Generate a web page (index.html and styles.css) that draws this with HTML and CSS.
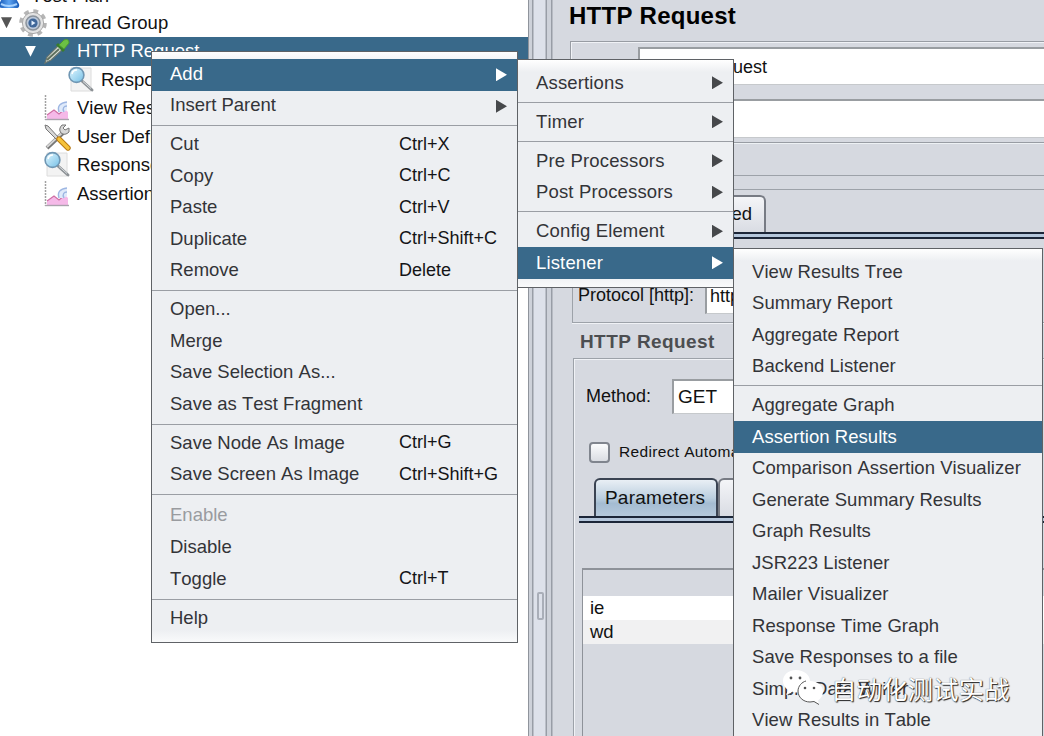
FILE: index.html
```html
<!DOCTYPE html>
<html lang="en">
<head>
    <meta charset="UTF-8">
    <meta name="viewport" content="width=device-width, initial-scale=1.0">
    <title>HTTP Request</title>
    <link rel="stylesheet" href="styles.css">
</head>
<body>
    <!-- Shared icons -->
    <svg class="defs" width="0" height="0">
        <defs>
            <linearGradient id="lens" x1="0" y1="0" x2="1" y2="1">
                <stop offset="0" stop-color="#e4f8ff"/>
                <stop offset="1" stop-color="#74bfe6"/>
            </linearGradient>
            <linearGradient id="flask" x1="0" y1="0" x2="1" y2="0">
                <stop offset="0" stop-color="#1557b5"/>
                <stop offset="0.5" stop-color="#5da4f2"/>
                <stop offset="1" stop-color="#1557b5"/>
            </linearGradient>
            <symbol id="icon-search" viewBox="0 0 28 28">
                <path d="M4 2h20v23H4z" fill="#f3f3f3" stroke="#dcdcdc"/>
                <path d="M15 15l10 9" stroke="#8d9296" stroke-width="3" stroke-linecap="round"/>
                <path d="M16 15.500l8 7" stroke="#d9dde0" stroke-width="1"/>
                <circle cx="9.500" cy="9" r="7.400" fill="url(#lens)" stroke="#6f96b3" stroke-width="1.600"/>
                <path d="M5 8a5 5 0 0 1 5-4" fill="none" stroke="#fff" stroke-width="1.500"/>
            </symbol>
            <symbol id="icon-graph" viewBox="0 0 28 28">
                <path d="M4 21l7-5 5 4 6-5 3 3v7H4z" fill="#f5b9e8"/>
                <path d="M4 21l7-5 5 4 6-5" fill="none" stroke="#cf6fa4" stroke-width="1.200"/>
                <path d="M16 18c-2-6 1-10 8-10v8l-3 2z" fill="#dfeafa"/>
                <path d="M16 18c-2-6 1-9 8-10M21 18c-2-4 0-6 3-6" fill="none" stroke="#9db6e2" stroke-width="1.400"/>
                <path d="M2.500 1v25" stroke="#a2a2a2" stroke-width="1.500" stroke-dasharray="2 1"/>
                <path d="M2 25.500h24" stroke="#aaa3ad" stroke-width="1.400"/>
            </symbol>
        </defs>
    </svg>

    <div class="window">
        <div class="tree">
            <div class="node node-root">
                <svg class="icon" viewBox="0 0 28 28"><path d="M10 1h8v10l6 11q1 4-3 4H7q-4 0-3-4l6-11z" fill="url(#flask)"/><path d="M6 22q8 4 16 0" stroke="#a6d2ff" stroke-width="2" fill="none"/></svg>
                <span>Test Plan</span>
            </div>
            <div class="node node-group">
                <i class="toggle"></i>
                <svg class="icon" viewBox="0 0 28 28">
                    <circle cx="14" cy="14" r="12" fill="none" stroke="#b5b5b5" stroke-width="3.600" stroke-dasharray="4.800 4.620"/>
                    <circle cx="14" cy="14" r="10.600" fill="#e2e2e2" stroke="#a9a9a9"/>
                    <circle cx="14" cy="14" r="7" fill="#b9c6d8" stroke="#8a929b" stroke-width="1.500"/>
                    <circle cx="14" cy="14" r="4.600" fill="#3e6699"/>
                    <path d="M12.500 11.500l4 2.500-4 2.500z" fill="#e4f1ff"/>
                </svg>
                <span>Thread Group</span>
            </div>
            <div class="node node-sampler selected">
                <i class="toggle"></i>
                <svg class="icon" viewBox="0 0 28 28">
                    <path d="M2 26l2-6L16 8l4 4L8 23z" fill="#dfe6df" stroke="#6b7770" stroke-width="1.200"/>
                    <path d="M4 23L16 12" stroke="#5f705d" stroke-width="2"/>
                    <path d="M14 7l7 7" stroke="#397d2c" stroke-width="3"/>
                    <path d="M16 8l5-5q5-2 5 3l-5 6z" fill="#6cc144" stroke="#4e9e2f"/>
                </svg>
                <span>HTTP Request</span>
            </div>
            <div class="node node-child">
                <svg class="icon"><use href="#icon-search"/></svg>
                <span>Response Assertion</span>
            </div>
            <div class="node node-leaf">
                <svg class="icon"><use href="#icon-graph"/></svg>
                <span>View Results Tree</span>
            </div>
            <div class="node node-leaf">
                <svg class="icon" viewBox="0 0 28 28">
                    <path d="M4 25L20 10" stroke="#777" stroke-width="4"/>
                    <path d="M4 24L20 9" stroke="#d5d5d5" stroke-width="1.800"/>
                    <path d="M19 2q-4 4-1 8 4 3 8-1V5l-4 2-2-2 3-3z" fill="#d8d8d8" stroke="#777"/>
                    <path d="M2 2l3 1 11 12-2 2L3 6z" fill="#d7d7d7" stroke="#777"/>
                    <path d="M16 16l9 9" stroke="#b87912" stroke-width="5.400" stroke-linecap="round"/>
                    <path d="M16 16l9 9" stroke="#f6c33b" stroke-width="3.400" stroke-linecap="round"/>
                </svg>
                <span>User Defined Variables</span>
            </div>
            <div class="node node-leaf">
                <svg class="icon"><use href="#icon-search"/></svg>
                <span>Response Assertion</span>
            </div>
            <div class="node node-leaf">
                <svg class="icon"><use href="#icon-graph"/></svg>
                <span>Assertion Results</span>
            </div>
        </div>

        <div class="divider"><i class="grip"></i></div>

        <div class="editor">
            <h1>HTTP Request</h1>
            <div class="name-box">
                <div class="field name-field">HTTP Request</div>
                <div class="field comment-field"></div>
            </div>
            <div class="server-box">
                <div class="main-tabs">
                    <div class="tab">Advanced</div>
                </div>
                <div class="tab-line"></div>
                <div class="protocol">
                    <label>Protocol [http]:</label>
                    <div class="field">http</div>
                </div>
            </div>
            <h2>HTTP Request</h2>
            <div class="request-box">
                <div class="method">
                    <label>Method:</label>
                    <div class="field">GET</div>
                </div>
                <div class="redirect"><i class="checkbox"></i>Redirect Automatically</div>
                <div class="param-tabs">
                    <div class="tab active">Parameters</div>
                    <div class="tab"></div>
                </div>
                <div class="tab-line"></div>
                <div class="table">
                    <div class="table-head"></div>
                    <div class="table-row">ie</div>
                    <div class="table-row odd">wd</div>
                </div>
            </div>
        </div>
    </div>

    <!-- Popup menus -->
    <div class="menu menu-main">
        <div class="item active"><span>Add</span><i class="arrow"></i></div>
        <div class="item"><span>Insert Parent</span><i class="arrow"></i></div>
        <hr>
        <div class="item"><span>Cut</span><kbd>Ctrl+X</kbd></div>
        <div class="item"><span>Copy</span><kbd>Ctrl+C</kbd></div>
        <div class="item"><span>Paste</span><kbd>Ctrl+V</kbd></div>
        <div class="item"><span>Duplicate</span><kbd>Ctrl+Shift+C</kbd></div>
        <div class="item"><span>Remove</span><kbd>Delete</kbd></div>
        <hr>
        <div class="item"><span>Open...</span></div>
        <div class="item"><span>Merge</span></div>
        <div class="item"><span>Save Selection As...</span></div>
        <div class="item"><span>Save as Test Fragment</span></div>
        <hr>
        <div class="item"><span>Save Node As Image</span><kbd>Ctrl+G</kbd></div>
        <div class="item"><span>Save Screen As Image</span><kbd>Ctrl+Shift+G</kbd></div>
        <hr>
        <div class="item disabled"><span>Enable</span></div>
        <div class="item"><span>Disable</span></div>
        <div class="item"><span>Toggle</span><kbd>Ctrl+T</kbd></div>
        <hr>
        <div class="item"><span>Help</span></div>
    </div>

    <div class="menu menu-add">
        <div class="item"><span>Assertions</span><i class="arrow"></i></div>
        <hr>
        <div class="item"><span>Timer</span><i class="arrow"></i></div>
        <hr>
        <div class="item"><span>Pre Processors</span><i class="arrow"></i></div>
        <div class="item"><span>Post Processors</span><i class="arrow"></i></div>
        <hr>
        <div class="item"><span>Config Element</span><i class="arrow"></i></div>
        <div class="item active"><span>Listener</span><i class="arrow"></i></div>
    </div>

    <div class="menu menu-listener">
        <div class="item"><span>View Results Tree</span></div>
        <div class="item"><span>Summary Report</span></div>
        <div class="item"><span>Aggregate Report</span></div>
        <div class="item"><span>Backend Listener</span></div>
        <hr>
        <div class="item"><span>Aggregate Graph</span></div>
        <div class="item active"><span>Assertion Results</span></div>
        <div class="item"><span>Comparison Assertion Visualizer</span></div>
        <div class="item"><span>Generate Summary Results</span></div>
        <div class="item"><span>Graph Results</span></div>
        <div class="item"><span>JSR223 Listener</span></div>
        <div class="item"><span>Mailer Visualizer</span></div>
        <div class="item"><span>Response Time Graph</span></div>
        <div class="item"><span>Save Responses to a file</span></div>
        <div class="item"><span>Simple Data Writer</span></div>
        <div class="item"><span>View Results in Table</span></div>
    </div>

    <div class="watermark">
        <svg width="42" height="38" viewBox="0 0 42 38">
            <path d="M14 2C6 2 1 7 1 13c0 4 2 7 5 9l-2 5 6-3c9 2 18-2 18-11C28 7 22 2 14 2z" fill="#fff"/>
            <path d="M28 13c-7 0-12 5-12 10.500s5 10.500 12 10.500l4-.5 5 3-1-4c3-2 5-5 5-9 0-6-6-10.500-13-10.500z" fill="#fff"/>
            <path d="M16 23c0 6 5 11 12 11l4-.5 5 3M16 23c0-5 4-9 8-10M6 27l5-3" fill="none" stroke="#555"/>
            <g fill="#555"><circle cx="9" cy="10" r="1.400"/><circle cx="18" cy="10" r="1.400"/><circle cx="23" cy="20" r="1.300"/><circle cx="32" cy="20" r="1.300"/></g>
        </svg>
        <span>自动化测试实战</span>
    </div>
</body>
</html>
```
FILE: styles.css
```css
:root {
    --panel: #d6d9e0;
    --select: #39698a;
    --menu: #edeff2;
    --line: #9da2a9;
    --navy: #1c2638;
}

* {
    margin: 0;
    padding: 0;
    box-sizing: border-box;
}

body {
    position: relative;
    width: 1044px;
    height: 736px;
    overflow: hidden;
    font-family: "Liberation Sans", Arial, sans-serif;
    font-size: 18.5px;
    font-kerning: none;
    color: #111;
    white-space: nowrap;
    background: var(--panel);
}

.defs {
    position: absolute;
}

.window {
    display: flex;
    height: 736px;
}

/* Test plan tree */
.tree {
    width: 528px;
    height: 756px;
    margin-top: -20px;
    background: #fff;
}

.node {
    display: flex;
    align-items: center;
    height: 28.5px;
}

.node .icon {
    width: 28px;
    height: 28px;
    margin-right: 6px;
    flex: none;
}

.node-root {
    padding-top: 4px;
    margin-left: -5px;
}

.node-root span {
    margin-left: 2px;
}

.node-group {
    padding-left: 1px;
}

.node-group .toggle {
    margin-right: 7px;
}

.node-sampler {
    padding-left: 25px;
}

.node-sampler .toggle {
    margin-right: 7px;
}

.node-child {
    padding-left: 67px;
}

.node-leaf {
    padding-left: 43px;
}

.toggle {
    width: 11px;
    height: 11px;
    background: #555;
    clip-path: polygon(0 0, 100% 0, 50% 100%);
}

.selected {
    color: #fff;
    background: var(--select);
}

.selected .toggle {
    background: #fff;
}

/* Split pane divider */
.divider {
    width: 25px;
    padding: 592px 0 0 8px;
    border-left: 1px solid #8f949c;
    background: linear-gradient(90deg, #cdd1d9 0 3px, #989da6 3px 4px, #dde1ea 5px 16px, #989da6 17px 18px, #cdd1d9 18px 22px, #989da6 22px 23px, #d6d9e0 24px);
}

.grip {
    display: block;
    width: 7px;
    height: 28px;
    border: 2px solid #a9aeb8;
    border-radius: 2px;
}

/* Editor */
.editor {
    flex: 1;
    overflow: hidden;
}

h1 {
    height: 41px;
    padding: 2px 0 0 16px;
    font-size: 24px;
    letter-spacing: 0.25px;
    line-height: 28px;
    color: #000;
}

h2 {
    height: 35px;
    padding-left: 27px;
    font-size: 19px;
    letter-spacing: 0.4px;
    line-height: 38px;
    color: #4c4e51;
}

.field {
    border: 2px solid #999da1;
    border-bottom: 1px solid #c6c9cc;
    background: #fff;
}

.name-box {
    height: 102px;
    margin-left: 17px;
    padding: 5px 0 0 67px;
    border: solid #989ca3;
    border-width: 1px 0 1px 1px;
    box-shadow: inset 1px 1px #f0f2f6, 0 1px #edf1f4;
}

.name-field {
    height: 38px;
    padding-left: 8px;
    font-size: 18px;
    line-height: 36px;
    border-right: 0;
}

.comment-field {
    height: 39px;
    margin-top: 14px;
    border-right: 0;
}

.server-box {
    height: 148px;
    margin: 32px 0 0 19px;
    border: solid var(--line);
    border-width: 1px 0 1px 1px;
    box-shadow: 0 1px #f0f2f6;
    background: linear-gradient(var(--line) 0 1px, transparent 1px) 0 13px no-repeat;
}

.main-tabs {
    display: flex;
    height: 56px;
    padding: 19px 0 0 93px;
}

.tab {
    border: 2px solid #777b84;
    border-bottom: 0;
    border-radius: 6px 6px 0 0;
    background: linear-gradient(#f4f5f8, #d9dce3);
    font-size: 19px;
    letter-spacing: 0.2px;
}

.main-tabs .tab {
    width: 100px;
    padding: 0 12px 0 0;
    text-align: right;
    font-size: 18.5px;
    letter-spacing: 0;
    line-height: 33px;
}

.tab-line {
    height: 7px;
    border: solid var(--navy);
    border-width: 2px 0;
    background: #b5c7dc;
}

.protocol {
    display: flex;
    padding: 39px 0 0 5px;
    line-height: 34px;
    font-size: 18px;
}

.protocol label {
    width: 127px;
}

.protocol .field {
    width: 200px;
    height: 36px;
    padding-left: 3px;
    line-height: 33px;
}

.request-box {
    height: 400px;
    margin-left: 20px;
    border: solid var(--line);
    border-width: 1px 0 0 1px;
    box-shadow: inset 1px 1px #f0f2f6;
}

.method {
    display: flex;
    padding: 20px 0 0 12px;
    line-height: 34px;
    font-size: 18px;
}

.method label {
    width: 86px;
}

.method .field {
    width: 180px;
    height: 35px;
    padding-left: 4px;
    line-height: 31px;
    font-size: 19px;
}

.redirect {
    display: flex;
    align-items: center;
    height: 22px;
    margin: 27px 0 15px 15px;
    font-size: 15.5px;
    letter-spacing: 0.35px;
}

.checkbox {
    width: 21px;
    height: 21px;
    margin-right: 9px;
    border: 2px solid #80858e;
    border-radius: 4px;
    background: linear-gradient(#fbfcfd, #dadde3);
}

.param-tabs {
    display: flex;
    height: 38px;
    padding-left: 20px;
}

.param-tabs .tab {
    width: 122px;
}

.param-tabs .tab.active {
    width: 124px;
    padding-left: 9px;
    line-height: 35px;
    border-color: #3a4352;
    background: linear-gradient(#e9eff5, #bccfdf 50%, #a4bcd2 65%, #b5c9dc);
}

.request-box .tab-line {
    margin-left: 5px;
}

.table {
    height: 200px;
    margin: 45px 0 0 8px;
    border: solid #8e9299;
    border-width: 2px 0 0 1px;
}

.table-head {
    height: 26px;
}

.table-row {
    height: 24px;
    padding-left: 7px;
    line-height: 24px;
    background: #fff;
}

.table-row.odd {
    background: #f1f1f2;
}

/* Popup menus */
.menu {
    position: absolute;
    padding: 7px 0 8px;
    border: 1px solid #5f6266;
    background: linear-gradient(#fff 0, var(--menu) 12px, var(--menu) calc(100% - 12px), #f9fafb);
    letter-spacing: 0.05px;
    color: #333438;
}

.menu-main {
    left: 151px;
    top: 51px;
    width: 367px;
    height: 592px;
}

.menu-add {
    left: 517px;
    top: 59px;
    width: 217px;
    height: 229px;
}

.menu-listener {
    left: 733px;
    top: 248px;
    width: 310px;
    height: 520px;
}

.item {
    display: flex;
    align-items: center;
    height: 31.5px;
    padding: 0 10px 0 18px;
}

.item span {
    flex: 1;
}

.menu-main .item {
    padding-bottom: 2px;
    letter-spacing: 0;
}

.menu-add .item {
    letter-spacing: 0.15px;
}

.item.active {
    color: #fff;
    background: var(--select);
}

.item.disabled {
    height: 34px;
    color: #999b9f;
}

.item kbd {
    width: 108px;
    font: inherit;
    font-size: 18px;
    color: #141416;
}

.arrow {
    width: 11px;
    height: 13px;
    background: #46484b;
    clip-path: polygon(0 0, 100% 50%, 0 100%);
}

.menu-main .arrow {
    margin-top: 2px;
}

.active .arrow {
    background: #fff;
}

.menu hr {
    height: 1px;
    margin: 3px 0 3.5px;
    border: 0;
    background: #9a9ea4;
}

.watermark {
    position: absolute;
    left: 782px;
    top: 668px;
    display: flex;
    align-items: center;
    font-family: "Noto Sans CJK SC", sans-serif;
    font-size: 25.5px;
    color: #fff;
    text-shadow: 1px 1px 1px #222, 0 0 1px #444;
}

.watermark span {
    margin-left: 7px;
}
```
